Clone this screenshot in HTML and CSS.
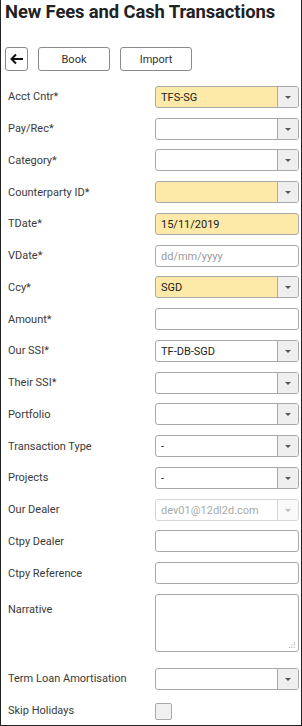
FILE: index.html
```html
<!DOCTYPE html>
<html lang="en">
<head>
  <meta charset="UTF-8">
  <meta name="viewport" content="width=device-width, initial-scale=1.0">
  <title>New Fees and Cash Transactions</title>
  <link rel="stylesheet" href="styles.css">
</head>
<body>
  <div class="panel">
    <h1>New Fees and Cash Transactions</h1>

    <div class="toolbar">
      <button class="back" aria-label="Back">
        <svg width="15" height="12" viewBox="0 0 15 12"><path d="M14 6H2.5M7 1.5L2.5 6 7 10.5" fill="none" stroke="#111" stroke-width="2"/></svg>
      </button>
      <button class="btn">Book</button>
      <button class="btn">Import</button>
    </div>

    <div class="form">
      <div class="row"><label>Acct Cntr*</label><div class="select req"><span>TFS-SG</span><i></i></div></div>
      <div class="row"><label>Pay/Rec*</label><div class="select"><span></span><i></i></div></div>
      <div class="row"><label>Category*</label><div class="select"><span></span><i></i></div></div>
      <div class="row"><label>Counterparty ID*</label><div class="select req"><span></span><i></i></div></div>
      <div class="row"><label>TDate*</label><div class="input req">15/11/2019</div></div>
      <div class="row"><label>VDate*</label><div class="input placeholder">dd/mm/yyyy</div></div>
      <div class="row"><label>Ccy*</label><div class="select req"><span>SGD</span><i></i></div></div>
      <div class="row"><label>Amount*</label><div class="input"></div></div>
      <div class="row"><label>Our SSI*</label><div class="select"><span>TF-DB-SGD</span><i></i></div></div>
      <div class="row"><label>Their SSI*</label><div class="select"><span></span><i></i></div></div>
      <div class="row"><label>Portfolio</label><div class="select"><span></span><i></i></div></div>
      <div class="row"><label>Transaction Type</label><div class="select"><span>-</span><i></i></div></div>
      <div class="row"><label>Projects</label><div class="select"><span>-</span><i></i></div></div>
      <div class="row"><label>Our Dealer</label><div class="select disabled"><span>dev01@12dl2d.com</span><i></i></div></div>
      <div class="row"><label>Ctpy Dealer</label><div class="input"></div></div>
      <div class="row"><label>Ctpy Reference</label><div class="input"></div></div>
      <div class="row tall"><label>Narrative</label><div class="textarea"><em class="grip"></em></div></div>
      <div class="row"><label>Term Loan Amortisation</label><div class="select"><span></span><i></i></div></div>
      <div class="row"><label>Skip Holidays</label><div class="check"></div></div>
    </div>
  </div>
</body>
</html>
```

FILE: styles.css
```css
* {
  box-sizing: border-box;
}

body {
  margin: 0;
  font-family: Roboto, 'Liberation Sans', sans-serif;
  color: #333;
  background: #fff;
}

.panel {
  width: 302px;
  height: 726px;
  border: 1px solid #222;
  border-top: none;
  overflow: hidden;
}

h1 {
  margin: 0;
  padding: 0 0 0 4px;
  font-size: 18.4px;
  line-height: 23px;
  font-weight: 700;
  color: #222;
  letter-spacing: -0.1px;
}

.toolbar {
  display: flex;
  gap: 10px;
  margin: 24px 0 0 4px;
}

.toolbar button {
  height: 24px;
  border: 1px solid #8a8a8a;
  border-radius: 3px;
  background: #fff;
  font-family: Roboto, 'Liberation Sans', sans-serif;
  font-size: 11px;
  color: #333;
  padding: 0;
}

.back {
  width: 23px;
  display: flex;
  align-items: center;
  justify-content: center;
}

.btn {
  width: 72px;
}

.form {
  margin-top: 15px;
}

.row {
  display: flex;
  align-items: center;
  height: 21.75px;
  margin-bottom: 10px;
}

.row label {
  width: 154px;
  padding-left: 7px;
  font-size: 11px;
  color: #3a3a3a;
}

.row.tall {
  height: 58px;
  align-items: flex-start;
  margin-bottom: 16px;
}

.row.tall label {
  padding-top: 9px;
}

.select, .input, .textarea {
  width: 144px;
  height: 22px;
  border: 1px solid #a9a9a9;
  border-radius: 3px;
  background: #fff;
  font-size: 11px;
  color: #222;
}

.input {
  padding: 4px 0 0 5px;
}

.placeholder {
  color: #9a9a9a;
}

.select {
  display: flex;
}

.select span {
  flex: 1;
  padding: 4px 0 0 5px;
}

.select i {
  width: 21px;
  border-left: 1px solid #a9a9a9;
  background: #efefef;
  border-radius: 0 2px 2px 0;
  position: relative;
}

.select i::after {
  content: '';
  position: absolute;
  left: 7px;
  top: 9px;
  border-left: 3.5px solid transparent;
  border-right: 3.5px solid transparent;
  border-top: 3.5px solid #555;
}

.req {
  background: #fde9a8;
}

.disabled {
  border-color: #d6d6d6;
  color: #aaa;
}

.disabled i {
  border-left-color: #d6d6d6;
  background: #fafafa;
}

.disabled i::after {
  border-top-color: #bbb;
}

.textarea {
  height: 58px;
  position: relative;
}

.grip {
  position: absolute;
  right: 3px;
  bottom: 3px;
  width: 7px;
  height: 7px;
  background: radial-gradient(circle, #999 0.6px, transparent 0.9px) 0 0 / 2.5px 2.5px;
  clip-path: polygon(100% 0, 100% 100%, 0 100%);
}

.check {
  width: 17px;
  height: 17px;
  border: 1px solid #a9a9a9;
  border-radius: 2px;
  background: #f0f0f0;
  margin-top: 2px;
}
```
